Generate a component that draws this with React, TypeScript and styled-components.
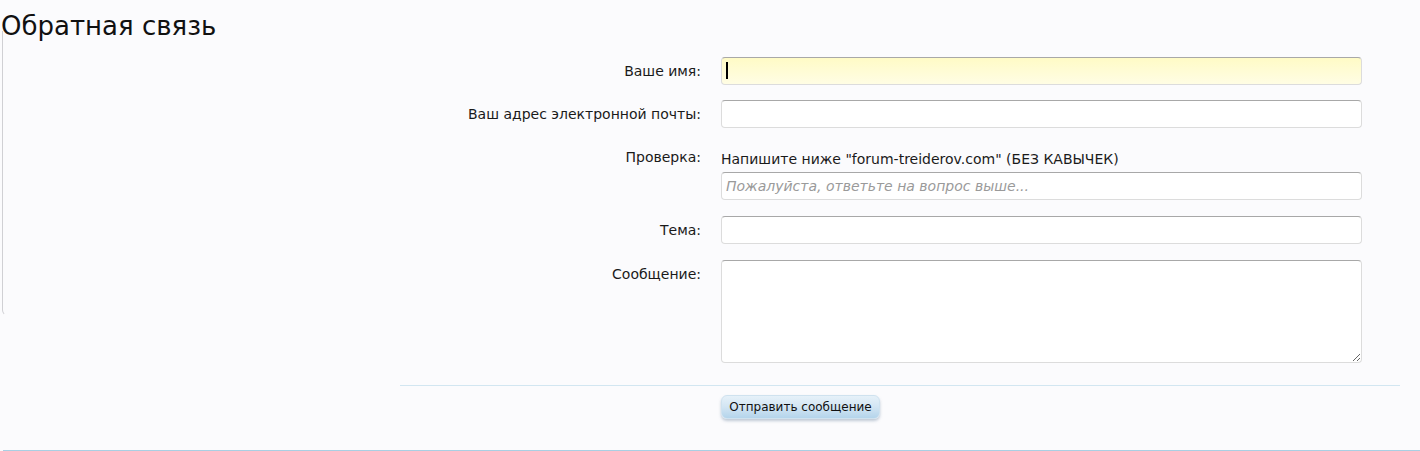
import React from "react";
import styled, { createGlobalStyle, css } from "styled-components";

const FONT = `"DejaVu Sans", Verdana, sans-serif`;

const Global = createGlobalStyle`
  html, body { margin: 0; padding: 0; background: #fbfbfd; }
  body { font-family: ${FONT}; color: #141414; }
  * { box-sizing: border-box; }
`;

/* page shell ------------------------------------------------------ */
const Page = styled.div`
  width: 1420px;
  height: 451px;
  overflow: hidden;
`;

const Title = styled.h1`
  margin: 0;
  padding: 13px 0 0 1px;
  height: 39px;
  font-size: 26px;
  line-height: 26px;
  font-weight: normal;
  color: #111;
  position: relative;
  z-index: 1;
`;

const Body = styled.div`
  display: flex;
  align-items: flex-start;
  margin-top: -8px;
`;

const Sidebar = styled.div`
  width: 400px;
  height: 285px;
  margin-left: 2px;
  border-left: 1px solid #d0d0d4;
  border-bottom: 1px solid transparent;
  border-bottom-left-radius: 6px;
  flex: none;
`;

const Main = styled.div`
  width: 1000px;
  margin-left: -2px;
  padding-top: 26px;
`;

/* form rows -------------------------------------------------------- */
const Row = styled.div<{ $gap?: number }>`
  display: grid;
  grid-template-columns: 301px 641px;
  column-gap: 20px;
  margin-bottom: ${(p) => p.$gap ?? 15}px;
`;

const Label = styled.label`
  text-align: right;
  font-size: 14px;
  line-height: 16px;
  padding-top: 6px;
  color: #1a1a1a;
`;

const Field = styled.div`
  display: flex;
  flex-direction: column;
  position: relative;
`;

const Hint = styled.div`
  font-size: 14px;
  line-height: 16px;
  padding: 8px 0 5px;
  color: #1a1a1a;
`;

const boxStyle = css`
  width: 641px;
  border: 1px solid #dcdcdc;
  border-top-color: #a8a8a8;
  border-radius: 4px;
  background: #fff;
  font-family: ${FONT};
  font-size: 14px;
  color: #111;
  padding: 4px 4px;
  outline: none;
`;

const Input = styled.input<{ $focused?: boolean }>`
  ${boxStyle}
  height: 28px;
  ${(p) =>
    p.$focused &&
    css`
      background: linear-gradient(to bottom, #fffbc6 0%, #fffde4 100%);
      caret-color: transparent;
    `}
  &::placeholder {
    color: #9a9a9a;
    font-style: italic;
  }
`;

/* text caret drawn over the focused field */
const Caret = styled.span`
  position: absolute;
  left: 5px;
  top: 5px;
  width: 2px;
  height: 17px;
  background: #000;
  pointer-events: none;
`;

const TextArea = styled.textarea`
  ${boxStyle}
  height: 103px;
  resize: both;
  display: block;
`;

const Divider = styled.div`
  height: 1px;
  margin-top: 22px;
  width: 1000px;
  background: #d2e6f1;
`;

const ButtonRow = styled.div`
  padding: 9px 0 0 321px;
  height: 64px;
`;

const Button = styled.button`
  height: 24px;
  width: 159px;
  border: 1px solid #cfe2ef;
  border-radius: 6px;
  background: linear-gradient(to bottom, #e6f1f9 0%, #d2e5f3 50%, #b4d4eb 100%);
  box-shadow: 0 2px 3px rgba(80, 110, 140, 0.35);
  font-family: ${FONT};
  font-size: 12px;
  color: #111;
  padding: 0;
  cursor: pointer;
`;

const FooterRule = styled.div`
  margin-left: 3px;
  height: 1px;
  background: #a9cfe3;
`;

export default function App() {
  return (
    <Page>
      <Global />
      <Title>Обратная связь</Title>
      <Body>
        <Sidebar />
        <Main>
          <Row>
            <Label>Ваше имя:</Label>
            <Field>
              <Input $focused />
              <Caret />
            </Field>
          </Row>
          <Row>
            <Label>Ваш адрес электронной почты:</Label>
            <Input />
          </Row>
          <Row $gap={16}>
            <Label>Проверка:</Label>
            <Field>
              <Hint>Напишите ниже "forum-treiderov.com" (БЕЗ КАВЫЧЕК)</Hint>
              <Input placeholder="Пожалуйста, ответьте на вопрос выше..." />
            </Field>
          </Row>
          <Row $gap={16}>
            <Label>Тема:</Label>
            <Input />
          </Row>
          <Row $gap={0}>
            <Label>Сообщение:</Label>
            <TextArea />
          </Row>
          <Divider />
          <ButtonRow>
            <Button>Отправить сообщение</Button>
          </ButtonRow>
        </Main>
      </Body>
      <FooterRule />
    </Page>
  );
}
